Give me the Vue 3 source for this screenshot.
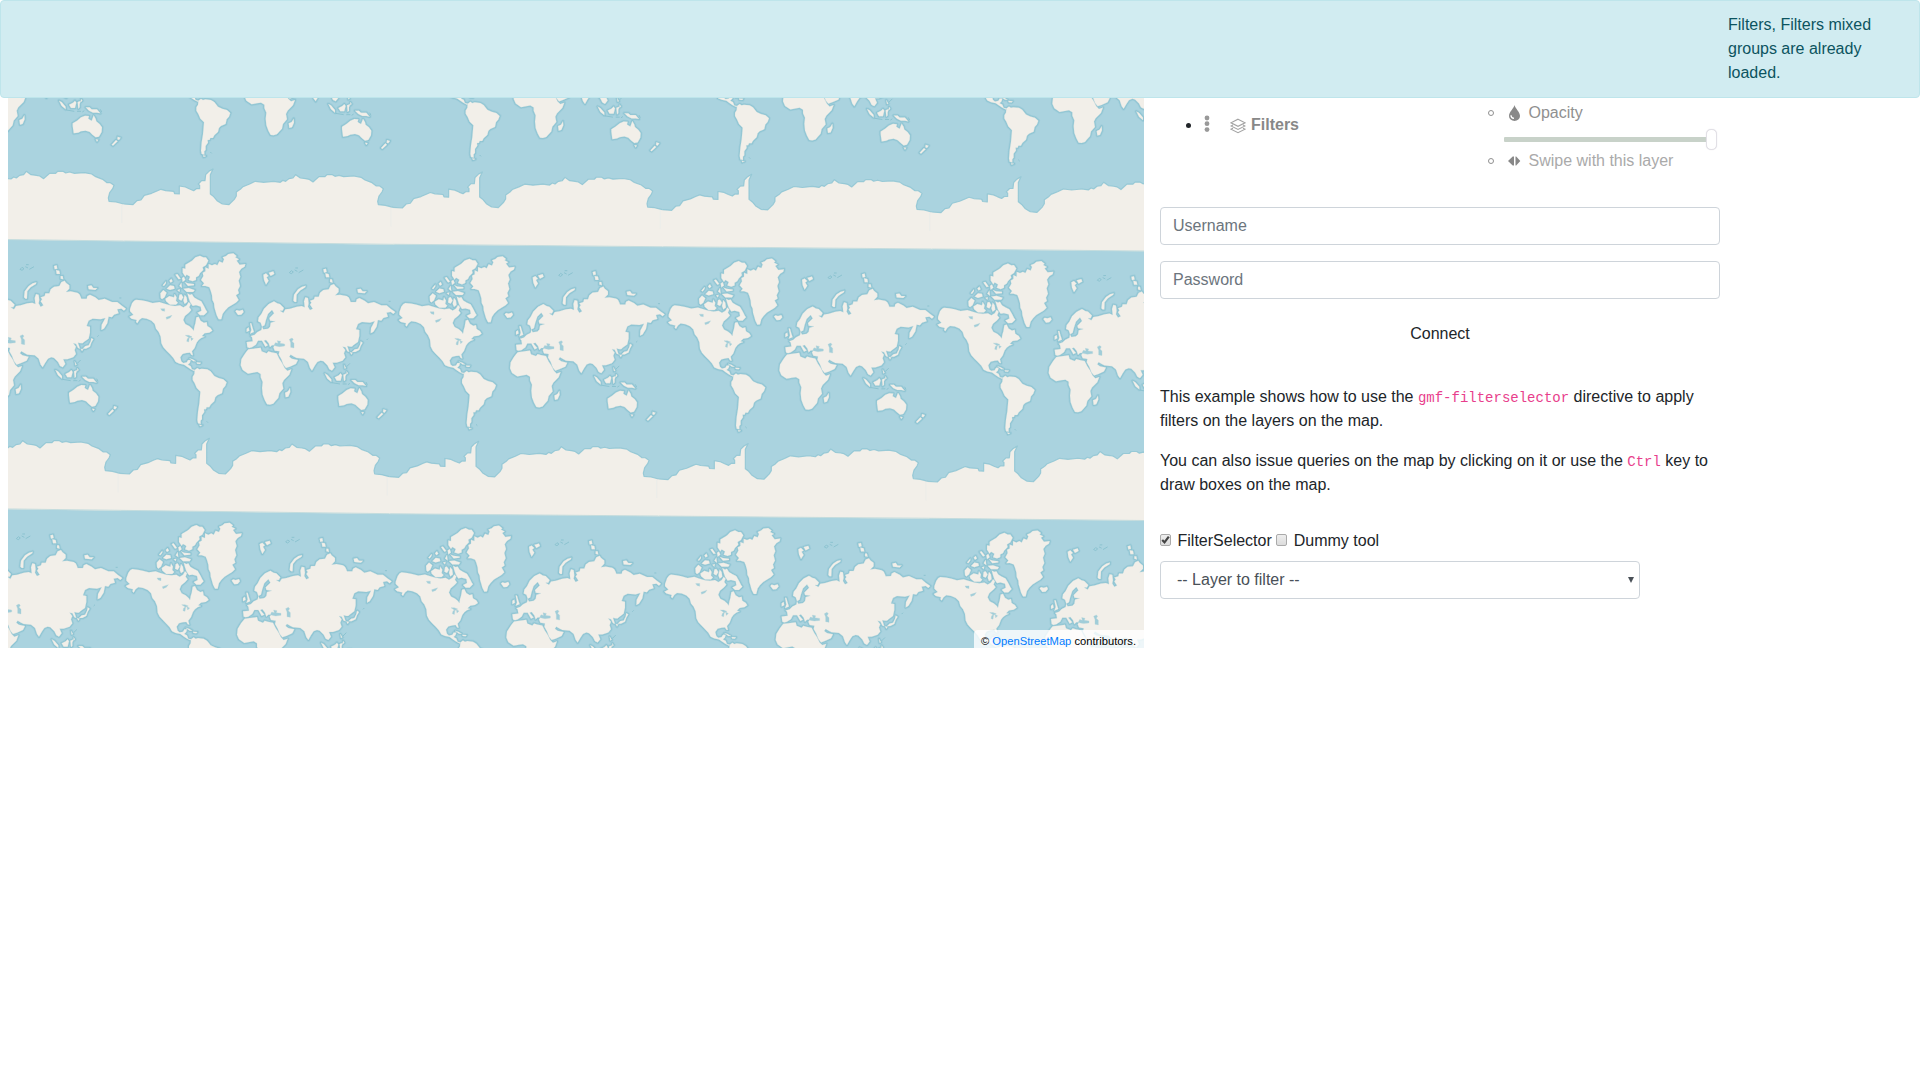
<script setup>
const step = 808
const skew = 11
// vertical drift of each world copy, from the column left of the origin
const drift = [-10, 0, 10, 17, 24, 32]
const copies = []
for (let row = -1; row <= 1; row++) {
  for (let col = -1; col <= 4; col++) {
    const dy = drift[col + 1]
    const rise = (drift[col + 2] ?? dy + 8) - dy
    copies.push({
      key: `${row}:${col}`,
      shift: `matrix(1 ${(rise - 10) / step} 0 1 ${col * step - row * skew} ${row * step + dy})`
    })
  }
}

const land = [
  // North America
  'M30 207L36 190 42 182 48 179 65 181 80 184 98 189 118 186 130 190 150 196 165 198 180 196 190 202 200 196 206 186 212 192 208 202 214 210 207 218 195 228 190 240 196 252 208 258 217 266 221 272 223 260 226 250 229 232 236 230 242 242 252 248 260 246 262 258 272 264 277 272 268 278 254 280 246 288 254 290 244 294 236 300 230 308 224 324 216 334 219 346 214 345 210 338 200 339 188 342 181 352 184 364 190 369 200 367 204 360 212 360 210 368 204 374 212 378 216 388 225 390 222 393 212 388 203 382 192 374 178 371 167 366 160 354 150 343 140 333 130 322 124 310 122 290 116 276 108 266 104 252 94 242 80 236 66 234 58 240 52 250 48 246 50 240 34 236 28 230 40 224 30 214Z',
  // Greenland and Iceland
  'M243 120L250 108 248 98 256 94 256 82 266 86 266 72 276 76 285 72 292 76 298 64 308 68 312 58 308 52 318 48 325 42 340 40 350 48 346 52 357 58 350 62 359 74 376 72 374 80 364 86 357 96 361 110 356 122 360 138 354 150 357 160 348 166 356 180 348 188 338 194 325 202 315 212 308 222 304 238 296 238 290 226 286 212 283 202 282 190 277 180 276 166 272 152 268 142 256 138 246 138 252 130Z',
  'M346 214L350 210 358 212 368 209 371 216 364 224 354 225Z',
  // Arctic islands
  'M188 98L188 84 196 86 196 74 206 68 216 62 226 52 240 47 250 52 258 52 265 62 258 76 248 82 250 90 240 100 236 108 228 112 228 120 218 124 206 120 210 110 200 104 196 110Z',
  'M122 174L121 160 130 150 140 158 134 172 126 178ZM138 184L136 176 148 168 162 172 164 162 170 172 168 182 174 188 168 194 150 194ZM178 164L184 162 190 172 184 182 176 178ZM202 160L210 164 216 162 222 172 232 178 244 184 252 198 258 210 262 216 252 226 240 226 232 218 244 212 242 200 228 196 218 198 210 186 206 174ZM194 164L200 172 202 186 194 192 190 182ZM140 146L150 136 162 138 164 146 150 150ZM128 136L138 124 138 130 132 138ZM148 122L154 116 158 124 152 128ZM166 104L172 102 182 116 176 118ZM186 114L192 110 196 120 188 126ZM178 138L184 128 186 144ZM194 126L204 130 222 132 222 136 204 138ZM190 146L206 144 224 150 220 156 200 156ZM172 150L180 148 178 156Z',
  // South America
  'M224 390L232 384 238 388 245 386 262 388 272 394 283 408 296 414 310 418 320 427 316 438 309 446 306 460 292 466 286 472 283 484 272 494 268 502 260 502 258 508 252 508 253 516 246 526 246 538 242 542 242 552 234 550 232 540 234 515 238 490 241 455 230 444 224 430 218 420 218 410 223 402ZM238 554L247 556 240 559Z',
  // Africa and Madagascar
  'M385 328L400 326 422 323 425 334 440 340 445 334 455 337 470 340 478 356 486 368 494 384 502 392 514 388 508 404 492 420 487 430 490 446 478 460 475 474 466 484 460 491 450 494 441 493 434 480 428 464 426 444 428 426 422 412 422 402 412 396 400 398 384 401 368 390 362 376 364 358 374 342 380 334ZM497 472L495 458 504 454 510 444 511 456 505 470Z',
  // Eurasia
  'M382 322L380 306 398 304 396 292 392 288 404 284 412 276 424 270 426 260 430 268 444 266 450 260 452 248 466 244 450 242 448 234 462 220 456 210 444 222 438 240 434 256 426 260 422 248 414 244 416 232 424 222 432 206 446 192 462 184 472 190 480 192 492 204 488 212 480 212 490 218 496 208 510 206 530 200 545 198 554 202 552 184 556 172 564 174 566 190 564 200 570 210 578 206 570 194 574 188 570 182 582 178 584 170 596 170 600 158 610 150 626 148 632 136 642 132 646 138 656 146 656 156 646 166 660 164 680 168 686 172 690 180 692 186 708 186 710 178 718 174 734 182 744 190 762 186 784 196 800 196 812 206 826 216 820 222 812 216 800 218 804 230 790 234 784 242 774 240 770 260 760 276 752 280 753 264 764 244 750 248 726 246 714 252 708 268 718 270 718 288 714 306 700 316 696 320 690 320 682 318 688 336 682 334 676 322 668 320 676 330 672 340 676 352 668 362 650 368 638 368 644 382 636 392 628 388 622 376 610 364 602 362 592 366 584 378 576 392 570 384 564 366 552 356 530 354 522 350 512 344 508 350 516 356 534 360 528 372 510 380 498 384 490 374 484 358 476 344 478 334 464 332 460 322 464 316 456 316 450 322 446 310 438 300 432 302 444 316 436 320 426 302 414 302 408 314 396 322 388 324Z',
  'M390 250L394 250 398 264 402 276 390 281 394 270ZM380 266L386 262 388 272 380 276ZM520 182L522 164 534 148 546 140 557 137 556 142 540 152 530 164 529 186 524 186ZM430 104L438 100 446 108 440 112 446 122 438 134 432 120ZM446 98L460 94 463 102 452 108ZM610 88L618 86 620 96 612 98ZM616 100L626 102 628 112 618 112ZM630 118L636 118 638 128 630 126ZM712 148L722 146 728 154 740 154 734 160 714 158Z',
  // Japan, Philippines, Indonesia
  'M722 304L728 308 722 318 718 330 706 336 696 336 704 328 714 326 720 314ZM690 336L698 338 694 344ZM614 400L622 404 634 418 634 426 622 416ZM644 412L656 406 662 400 666 406 662 422 650 422ZM670 404L680 400 676 410 676 420 672 424ZM672 374L678 384 674 386ZM680 394L684 400 680 404ZM694 420L706 420 712 426 728 426 738 438 728 436 716 436 704 430Z',
  // Australia and New Zealand
  'M655 476L655 468 668 460 680 450 692 445 704 446 702 454 712 460 718 444 724 454 726 462 736 470 743 480 742 494 734 508 724 510 714 502 706 494 694 490 680 492 672 496 658 498ZM724 516L732 517 728 523ZM790 508L799 511 794 518 789 516ZM785 518L790 522 776 535 772 532Z',
  // Cuba and Hispaniola
  'M208 355L218 358 228 364 220 364ZM230 367L243 368 240 372 231 371Z'
].join('')

const water =
  'M462 316L466 308 474 310 472 302 482 304 480 310 494 312 494 318 478 320 468 318ZM508 298L516 294 520 298 516 304 522 310 522 324 512 322 512 308ZM196 286L206 286 216 290 208 294ZM202 296L208 292 206 306 200 304ZM212 292L220 296 214 302ZM122 206L134 206 134 214 126 212ZM138 232L156 226 150 234 140 238Z'

const ice =
  'M0 700L28 702 40 690 52 688 62 674 84 668 100 661 112 656 126 660 150 662 153 669 167 670 167 646 185 649 198 655 210 660 218 654 228 654 228 644 224 640 234 630 244 630 246 612 256 602 268 595 260 612 260 670 270 678 280 690 296 700 316 702 332 686 338 676 338 664 350 656 358 648 378 640 395 632 420 635 450 632 470 635 478 629 486 632 496 624 508 622 516 612 530 622 546 624 556 626 568 634 586 618 604 618 610 612 626 612 634 617 646 614 660 618 690 616 712 620 724 628 745 636 758 646 768 646 779 654 775 664 766 676 762 692 764 702 785 704 808 710'
</script>

<template>
  <div class="page">
    <div class="alert"><div class="message">Filters, Filters mixed groups are already loaded.</div></div>
    <main>
      <div class="map">
        <svg class="tiles" width="1136" height="550" viewBox="8 98 1136 550">
          <defs>
            <g id="world">
              <path :d="ice + 'L812 711V822L0 811Z'" fill="#f2efe9" />
              <path d="M0 811L808 821" stroke="#c4dcdd" stroke-width="3" />
              <path d="M684 706V765" stroke="#e8ecea" stroke-width="2" transform="translate(118 2)" />
              <path :d="ice" class="coast" />
              <path :d="land" class="halo wide" />
              <path :d="land" class="halo" />
              <path :d="land" class="land" />
              <path :d="water" class="lake" />
              <path class="faint" d="M508 98L514 92 520 96 514 101ZM524 90L532 94M536 98L550 90M526 84H534M260 544L264 548M668 432H680M684 434L690 430M740 300L744 296M806 184H812M690 370L680 380M738 426L742 434M636 428L660 432" />
            </g>
          </defs>
          <g transform="translate(120 240) scale(.33333)">
            <use v-for="c in copies" :key="c.key" href="#world" :transform="c.shift" />
          </g>
        </svg>
        <div class="attribution">© <a>OpenStreetMap</a> contributors.</div>
      </div>

      <section class="side">
        <div class="tree">
          <div class="group">
            <i class="disc"></i>
            <svg class="dots" width="6" height="18" viewBox="0 0 6 18" fill="#999">
              <circle cx="3" cy="3" r="2.4" /><circle cx="3" cy="8.7" r="2.4" /><circle cx="3" cy="14.6" r="2.4" />
            </svg>
            <svg class="layers" width="16" height="16" viewBox="0 0 16 16" fill="none" stroke="#a3a3a3" stroke-width="1.1">
              <path d="M8 1.2L15 4.8 8 8.3 1 4.8ZM3 7L1 8 8 11.5 15 8 13 7M3 10.2L1 11.2 8 14.7 15 11.2 13 10.2" />
            </svg>
            <b>Filters</b>
          </div>
          <div class="options">
            <div class="option">
              <i class="ring"></i>
              <svg width="14" height="18" viewBox="0 0 14 18">
                <path d="M6.5 1C6 4 1 8 1 12A5.5 5 0 0 0 12 12C12 8 7 4 6.5 1Z" fill="#888" />
                <path d="M3 11.2Q3 14 6 14.4" fill="none" stroke="#fff" stroke-width="1.3" />
              </svg>
              <span>Opacity</span>
            </div>
            <div class="slider"><div class="track"></div><div class="thumb"></div></div>
            <div class="option pale">
              <i class="ring"></i>
              <svg width="14" height="18" viewBox="0 0 14 18" fill="#888">
                <path d="M6 4.5V13.5H4.7L0 9 4.7 4.5ZM7.5 4.5V13.5H8.2L12.3 9 8.2 4.5Z" />
              </svg>
              <span>Swipe with this layer</span>
            </div>
          </div>
        </div>

        <form @submit.prevent>
          <input class="control" type="text" placeholder="Username" />
          <input class="control" type="password" placeholder="Password" />
          <button class="connect">Connect</button>
        </form>

        <p>This example shows how to use the <code>gmf-filterselector</code> directive to apply filters on the layers on the map.</p>
        <p>You can also issue queries on the map by clicking on it or use the <code>Ctrl</code> key to draw boxes on the map.</p>

        <div class="tools">
          <i class="box"><svg width="11" height="12" viewBox="0 0 11 12"><path d="M2.2 6L4.5 8.3 8.8 2.6" fill="none" stroke="#444" stroke-width="2.2" /></svg></i>
          <span>FilterSelector</span>
          <i class="box second"></i>
          <span>Dummy tool</span>
        </div>
        <div class="select">
          <span>-- Layer to filter --</span>
          <svg width="6" height="6" viewBox="0 0 6 6"><path d="M0 0H6L3 6Z" fill="#495057" /></svg>
        </div>
      </section>
    </main>
  </div>
</template>

<style>
body {
  margin: 0;
  background: #fff;
}
</style>

<style scoped>
.page,
.page * {
  box-sizing: border-box;
}
.page {
  width: 1920px;
  height: 1080px;
  overflow: hidden;
  font: 16px/24px "Liberation Sans", Arial, sans-serif;
  color: #212529;
}
.alert {
  height: 98px;
  border: 1px solid #bee5eb;
  border-radius: 4px;
  background: #d1ecf1;
  color: #0c5460;
  padding: 12px 20px 12px 1727px;
}
.message {
  width: 172px;
}
main {
  display: flex;
  padding-left: 8px;
}
.map {
  position: relative;
  width: 1136px;
  height: 550px;
  background: #aad3df;
}
.tiles {
  display: block;
}
.land {
  fill: #f2efe9;
  stroke: #cfdfdf;
  stroke-width: 1;
}
.halo {
  fill: none;
  stroke: #84bfcf;
  stroke-width: 6;
  stroke-linejoin: round;
  opacity: 0.75;
}
.wide {
  stroke-width: 11;
  opacity: 0.3;
}
.coast {
  fill: none;
  stroke: #8bc3d2;
  stroke-width: 3.5;
  stroke-linejoin: round;
  opacity: 0.8;
}
.lake {
  fill: #a0cdd9;
  stroke: #b5d3d8;
  stroke-width: 1;
}
.faint {
  fill: none;
  stroke: #86bfcd;
  stroke-width: 2.5;
}
.attribution {
  position: absolute;
  right: 0;
  bottom: 0;
  width: 170px;
  height: 18px;
  padding-left: 7px;
  border-radius: 4px 0 0;
  background: rgba(255, 255, 255, 0.8);
  color: #000;
  font-size: 11.2px;
  line-height: 23px;
  white-space: nowrap;
}
.attribution a {
  color: #007bff;
}
.side {
  width: 560px;
  margin-left: 16px;
}
.tree {
  display: flex;
  height: 109px;
}
.group {
  display: flex;
  width: 326px;
  height: 24px;
  margin-top: 15px;
  padding-left: 26px;
  align-items: center;
  color: #888;
}
.disc {
  width: 5px;
  height: 5px;
  margin-top: 1px;
  border-radius: 50%;
  background: #212529;
}
.dots {
  margin: -2px 0 0 13px;
}
.layers {
  margin: 2px 5px 0 20px;
}
.option {
  display: flex;
  height: 24px;
  padding-left: 1.5px;
  align-items: center;
  color: #909090;
}
.options {
  padding-top: 3px;
}
.option svg {
  margin: -1px 7px 0 14px;
}
.ring {
  width: 6px;
  height: 6px;
  border: 1px solid #909090;
  border-radius: 50%;
  margin-top: -1px;
}
.pale {
  color: #aaa;
}
.slider {
  display: flex;
  align-items: center;
  height: 24px;
  padding: 4px 0 0 18px;
}
.track {
  width: 202px;
  height: 5px;
  border-radius: 1px 0 0 1px;
  background: #c8d2c9;
}
.thumb {
  width: 11px;
  height: 21px;
  margin-top: 1px;
  border: 1px solid #e2e0e6;
  border-radius: 5px;
  background: #fff;
  box-shadow: 0 0 1px #d8d6de;
}
form {
  display: flex;
  flex-direction: column;
  gap: 16px;
  margin-bottom: 32px;
}
.control {
  width: 560px;
  height: 38px;
  padding: 6px 12px;
  border: 1px solid #ced4da;
  border-radius: 4px;
  background: #fff;
  font: inherit;
}
.control::placeholder {
  color: #6c757d;
  opacity: 1;
}
.connect {
  height: 38px;
  border: 0;
  padding: 0;
  background: none;
  color: #212529;
  font: inherit;
}
p {
  margin: 0 0 16px;
}
code {
  font: 14px "Liberation Mono", monospace;
  color: #e83e8c;
}
.tools {
  display: flex;
  height: 24px;
  margin-top: 32px;
  align-items: center;
}
.box {
  width: 11px;
  height: 12px;
  margin: -3px 6.5px 0 0;
  border: 1px solid #aaa;
  border-radius: 2px;
  background: linear-gradient(#eee, #dcdcdc);
}
.box svg {
  display: block;
  margin: -1px;
}
.second {
  margin-left: 4.5px;
}
.select {
  display: flex;
  align-items: center;
  justify-content: space-between;
  width: 480px;
  height: 38px;
  margin-top: 8px;
  padding: 0 5px 0 16px;
  border: 1px solid #ced4da;
  border-radius: 4px;
  color: #495057;
}
</style>
